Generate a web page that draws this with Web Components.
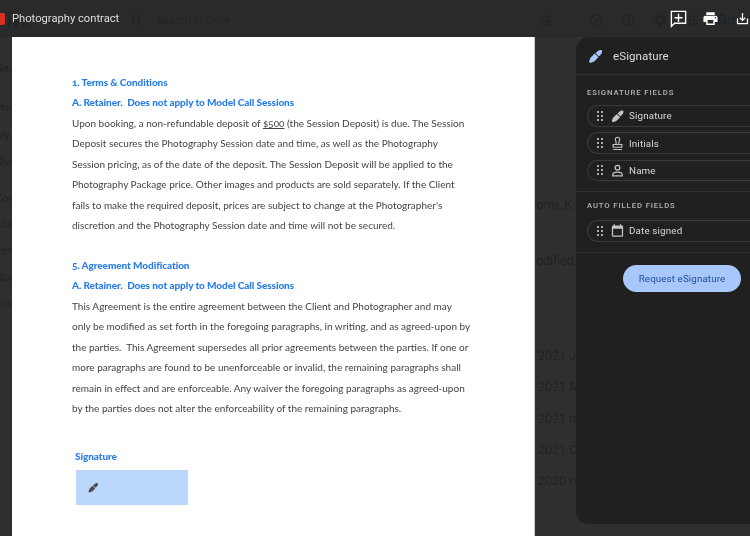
<!DOCTYPE html>
<html>
<head>
<meta charset="utf-8">
<title>Photography contract</title>
<style>
html, body { margin: 0; height: 100%; background: #2f2f2f; overflow: hidden; }
</style>
</head>
<body>

<pdf-viewer>
  <doc-page>
    <doc-section>
      <span slot="title">1. Terms &amp; Conditions</span>
      <span slot="sub">A. Retainer.&nbsp; Does not apply to Model Call Sessions</span>
      Upon booking, a non-refundable deposit of <u>$500</u> (the Session Deposit) is due. The Session<br>
      Deposit secures the Photography Session date and time, as well as the Photography<br>
      Session pricing, as of the date of the deposit. The Session Deposit will be applied to the<br>
      Photography Package price. Other images and products are sold separately. If the Client<br>
      fails to make the required deposit, prices are subject to change at the Photographer's<br>
      discretion and the Photography Session date and time will not be secured.
    </doc-section>
    <doc-section>
      <span slot="title">5. Agreement Modification</span>
      <span slot="sub">A. Retainer.&nbsp; Does not apply to Model Call Sessions</span>
      This Agreement is the entire agreement between the Client and Photographer and may<br>
      only be modified as set forth in the foregoing paragraphs, in writing, and as agreed-upon by<br>
      the parties.&nbsp; This Agreement supersedes all prior agreements between the parties. If one or<br>
      more paragraphs are found to be unenforceable or invalid, the remaining paragraphs shall<br>
      remain in effect and are enforceable. Any waiver the foregoing paragraphs as agreed-upon<br>
      by the parties does not alter the enforceability of the remaining paragraphs.
    </doc-section>
    <signature-box>Signature</signature-box>
  </doc-page>
  <esign-panel>
    <panel-group heading="eSignature fields">
      <field-chip icon="pen">Signature</field-chip>
      <field-chip icon="stamp">Initials</field-chip>
      <field-chip icon="person">Name</field-chip>
    </panel-group>
    <panel-group class="auto" heading="Auto filled fields">
      <field-chip icon="calendar">Date signed</field-chip>
    </panel-group>
  </esign-panel>
</pdf-viewer>

<script>
// shared icon shapes, all on a 24 box
const ICONS = {
  pen: `<g transform="rotate(45 12 12)"><path fill="currentColor" d="M10.800 24h2.400l2.300-5V11h-7v8zM9 9.800h6V5.500C15 3.500 13.500 1.500 12 1c-1.500.5-3 2.500-3 4.500z"/></g>`,
  stamp: `<path fill="none" stroke="currentColor" stroke-width="1.800" d="M9.800 13.500V10.500C9.800 8.500 8.500 7.500 8.500 5.500a3.500 3.500 0 0 1 7 0c0 2-1.300 3-1.300 5v3zM5 13.500h14V18H5zM5 21.500h14"/>`,
  person: `<circle cx="12" cy="7.500" r="3.700" fill="none" stroke="currentColor" stroke-width="2"/><path fill="none" stroke="currentColor" stroke-width="2" d="M4.500 20.500v-2c0-2.800 4.500-4 7.500-4s7.500 1.200 7.500 4v2z"/>`,
  calendar: `<path fill="currentColor" d="M19 4h-1V2h-2v2H8V2H6v2H5a2 2 0 0 0-2 2v14a2 2 0 0 0 2 2h14a2 2 0 0 0 2-2V6a2 2 0 0 0-2-2zm0 16H5V9h14z"/>`,
  search: `<path fill="currentColor" d="M15.500 14h-.79l-.28-.27A6.470 6.470 0 0 0 16 9.500 6.500 6.500 0 1 0 9.500 16c1.610 0 3.090-.59 4.230-1.570l.27.28v.79l5 4.990L20.490 19l-4.990-5zm-6 0C7.010 14 5 11.990 5 9.500S7.010 5 9.500 5 14 7.010 14 9.500 11.990 14 9.500 14z"/>`,
  tune: `<path fill="currentColor" d="M3 17v2h6v-2H3zM3 5v2h10V5H3zm10 16v-2h8v-2h-8v-2h-2v6h2zM7 9v2H3v2h4v2h2V9H7zm14 4v-2H11v2h10zm-6-4h2V7h4V5h-4V3h-2v6z"/>`,
  check: `<circle cx="12" cy="12" r="9" fill="none" stroke="currentColor" stroke-width="2"/><path fill="none" stroke="currentColor" stroke-width="2" d="M7.500 15.500l9-8"/>`,
  help: `<circle cx="12" cy="12" r="9" fill="none" stroke="currentColor" stroke-width="2"/><path fill="none" stroke="currentColor" stroke-width="2" d="M9.300 9.800a2.700 2.700 0 1 1 4.300 2.200c-1 .8-1.600 1.200-1.600 2.600M12 16v2"/>`,
  gear: `<path fill="currentColor" fill-rule="evenodd" d="M19.140 12.940c.04-.3.06-.61.06-.94 0-.32-.02-.64-.07-.94l2.030-1.580c.18-.14.23-.41.12-.61l-1.920-3.320c-.12-.22-.37-.29-.59-.22l-2.390.96c-.5-.38-1.030-.7-1.620-.94L14.400 2.810c-.04-.24-.24-.41-.48-.41h-3.840c-.24 0-.43.17-.47.41L9.250 5.350c-.59.24-1.130.57-1.620.94l-2.390-.96c-.22-.08-.47 0-.59.22L2.740 8.870c-.12.21-.08.47.12.61l2.030 1.580c-.05.3-.09.63-.09.94s.02.64.07.94l-2.030 1.580c-.18.14-.23.41-.12.61l1.920 3.320c.12.22.37.29.59.22l2.390-.96c.5.38 1.030.7 1.620.94l.36 2.540c.05.24.24.41.48.41h3.840c.24 0 .44-.17.47-.41l.36-2.540c.59-.24 1.130-.56 1.620-.94l2.390.96c.22.08.47 0 .59-.22l1.920-3.320c.12-.22.07-.47-.12-.61l-2.010-1.580zM12 15.600c-1.980 0-3.600-1.620-3.600-3.600s1.620-3.600 3.600-3.600 3.600 1.620 3.600 3.600-1.620 3.600-3.600 3.600z"/>`,
  apps: `<path fill="currentColor" d="M4 4h4v4H4zM10 4h4v4h-4zM16 4h4v4h-4zM4 10h4v4H4zM10 10h4v4h-4zM16 10h4v4h-4zM4 16h4v4H4zM10 16h4v4h-4zM16 16h4v4h-4z"/>`,
  comment: `<path fill="none" stroke="currentColor" stroke-width="1.700" d="M3 3h18v15H7l-4 4z"/><path fill="currentColor" d="M11.100 6h1.800v4.100H17v1.800h-4.100V16h-1.800v-4.100H7v-1.800h4.100z"/>`,
  print: `<path fill="currentColor" d="M19 8H5c-1.660 0-3 1.340-3 3v6h4v4h12v-4h4v-6c0-1.660-1.340-3-3-3zm-3 11H8v-5h8v5zm3-7c-.55 0-1-.45-1-1s.45-1 1-1 1 .45 1 1-.45 1-1 1zm-1-9H6v4h12V3z"/>`,
  download: `<path fill="currentColor" d="M19 12v7H5v-7H3v7c0 1.100.9 2 2 2h14c1.100 0 2-.9 2-2v-7h-2zm-6 .67l2.590-2.580L17 11.500l-5 5-5-5 1.410-1.410L11 12.670V3h2z"/>`,
  drag: `<path fill="currentColor" d="M6 2h4v4H6zM14 2h4v4h-4zM6 10h4v4H6zM14 10h4v4h-4zM6 18h4v4H6zM14 18h4v4h-4z"/>`
};

function icon(name, size) {
  return `<svg width="${size}" height="${size}" viewBox="0 0 24 24" style="display:block;flex:none">${ICONS[name]}</svg>`;
}

// base class, saves the attachShadow boilerplate in every element
class ShadowEl extends HTMLElement {
  constructor() {
    super();
    this.attachShadow({mode: 'open'}).innerHTML = this.render();
  }
  render() { return '<slot></slot>'; }
}

/*what the dimmed Drive page behind the viewer shows*/
class DriveBackdrop extends ShadowEl {
  render() {
    return `<style>
      :host { position: absolute; inset: 0; display: block; color: #232323; font: 11px Roboto, sans-serif; overflow: hidden; }
      .top { display: flex; align-items: center; height: 40px; }
      .top .logo { font-size: 20px; margin-left: -13px; width: 143px; }
      .top .find { margin-left: 12px; font-size: 11px; width: 381px; white-space: nowrap; }
      .top .go { font-size: 15px; font-weight: 700; margin-left: 16px; color: #1e2430; }
      .rail { position: absolute; left: -5px; top: 62px; font-size: 11px; line-height: 13px; white-space: nowrap; }
      .files { position: absolute; left: 532px; top: 197px; font-size: 12.500px; line-height: 16px; white-space: nowrap; }
      .files div { margin-bottom: 15.300px; }
      .line { position: absolute; left: 535px; top: 122px; width: 40px; height: 1px; background: #2a3540; }
    </style>
    <div class="top">
      <span class="logo">Drive</span>
      ${icon('search', 15)}
      <span class="find">Search in Drive</span>
      ${icon('tune', 15)}
      <span style="width:36px"></span>
      ${icon('check', 15)}<span style="width:17px"></span>${icon('help', 15)}<span style="width:17px"></span>${icon('gear', 15)}<span style="width:18px"></span>${icon('apps', 15)}
      <span class="go">Go</span>
    </div>
    <div class="rail">
      <div style="margin-bottom:26px">New</div>
      <div style="margin-bottom:15px">Priority</div>
      <div style="margin-bottom:14px">My Drive</div>
      <div style="margin-bottom:23px">Shared drives</div>
      <div style="margin-bottom:13px">Computers</div>
      <div style="margin-bottom:13px">Shared with me</div>
      <div style="margin-bottom:14px">Recent</div>
      <div style="margin-bottom:13px">Starred</div>
      <div>Trash</div>
    </div>
    <div class="line"></div>
    <div class="files">
      <div style="margin-bottom:40px">form_K...</div>
      <div style="margin-bottom:79px;margin-left:-7px">Modified</div>
      <div style="margin-left:6px">2021 Jon</div>
      <div style="margin-left:6px">2021 Mik</div>
      <div style="margin-left:6px">2021 me</div>
      <div style="margin-left:6px">2021 Cry</div>
      <div style="margin-left:6px">2020 me</div>
    </div>`;
  }
}

class ViewerBar extends ShadowEl {
  render() {
    return `<style>
      :host { display: flex; align-items: center; height: 37px; color: #fff; position: relative; }
      .pdf { width: 5px; height: 12px; background: #d93025; border-radius: 0 2px 2px 0; margin-right: 7px; flex: none; }
      h1 { font: 400 11.200px Roboto, sans-serif; color: #dedede; margin: 0 auto 0 0; }
      .acts { display: flex; align-items: center; margin-top: -1px; }
    </style>
    <div class="pdf"></div>
    <h1><slot></slot></h1>
    <div class="acts">
      ${icon('comment', 19)}<span style="width:14px"></span>${icon('print', 17)}<span style="width:16px"></span>${icon('download', 15)}
    </div>`;
  }
}

class PdfViewer extends ShadowEl {
  render() {
    return `<style>
      :host { display: block; position: relative; height: 536px; overflow: hidden; filter: blur(.3px); background: linear-gradient(#2a2a2a 0, #2a2a2a 37px, #2f2f2f 37px); }
      .body { display: flex; gap: 42px; padding-left: 12px; align-items: flex-start; position: relative; }
    </style>
    <drive-backdrop></drive-backdrop>
    <viewer-bar>Photography contract</viewer-bar>
    <div class="body"><slot></slot></div>`;
  }
}

class DocPage extends ShadowEl {
  render() {
    return `<style>
      :host { display: block; flex: none; box-sizing: border-box; width: 522px; height: 499px; padding: 35px 40px 0 60px; background: #fff; box-shadow: 1px 0 0 #c8c8c8; }
    </style><slot></slot>`;
  }
}

class DocSection extends ShadowEl {
  render() {
    return `<style>
      :host { display: block; margin-bottom: 19.400px; font: 400 10px/20.430px Lato, "Open Sans", sans-serif; color: #444; white-space: nowrap; font-variant-numeric: oldstyle-nums; }
      .h { display: block; color: #2a7de9; font-weight: 900; letter-spacing: -.08px; }
    </style>
    <span class="h"><slot name="title"></slot></span>
    <span class="h"><slot name="sub"></slot></span>
    <slot></slot>`;
  }
}

class SignatureBox extends ShadowEl {
  render() {
    return `<style>
      :host { display: block; margin: 28px 0 0 3px; font: 900 10px/20px Lato, sans-serif; color: #2a7de9; letter-spacing: -.08px; }
      .box { display: flex; align-items: center; box-sizing: border-box; width: 112px; height: 35px; margin: 4px 0 0 1px; padding-left: 11px; background: #bbd7fc; color: #4a4a4a; }
    </style>
    <slot></slot>
    <div class="box">${icon('pen', 13)}</div>`;
  }
}

class EsignPanel extends ShadowEl {
  render() {
    return `<style>
      :host { display: block; flex: none; width: 220px; height: 487px; box-sizing: border-box; background: #202020; border-radius: 13px 0 0 13px; color: #e3e3e3; font-family: Roboto, sans-serif; }
      header { display: flex; align-items: center; gap: 8px; height: 38px; padding-left: 11px; padding-top: 1px; box-sizing: border-box; border-bottom: 1px solid #303030; }
      header span { font-size: 11.500px; letter-spacing: .1px; color: #dcdcdc; }
      header svg { color: #a8c7fa; }
      .foot { display: flex; padding: 12px 0 0 47px; }
      button { border: 0; width: 118px; height: 27px; border-radius: 14px; background: #a8c7fa; color: #1e4f9c; font: 400 9.800px Roboto, sans-serif; letter-spacing: .1px; padding: 0; }
    </style>
    <header>${icon('pen', 18)}<span>eSignature</span></header>
    <slot></slot>
    <div class="foot"><button>Request eSignature</button></div>`;
  }
}

class PanelGroup extends ShadowEl {
  render() {
    const heading = this.getAttribute('heading') || '';
    return `<style>
      :host { display: block; padding: 11px 0 10px 11px; border-bottom: 1px solid #303030; }
      :host(.auto) { padding-top: 7px; padding-bottom: 10px; }
      :host(.auto) h2 { margin-bottom: 7px; }
      h2 { margin: 0 0 5px; font: 500 7.700px/14px Roboto, sans-serif; letter-spacing: .9px; text-transform: uppercase; color: #b4b4b4; }
      .list { display: flex; flex-direction: column; gap: 5.800px; }
    </style>
    <h2>${heading}</h2>
    <div class="list"><slot></slot></div>`;
  }
}

class FieldChip extends ShadowEl {
  render() {
    const which = this.getAttribute('icon');
    return `<style>
      :host { display: flex; align-items: center; box-sizing: border-box; height: 21.500px; padding-left: 6px; border: 1px solid #3a3a3a; border-right: 0; border-radius: 11px 0 0 11px; font: 400 9.800px Roboto, sans-serif; letter-spacing: .15px; color: #dadada; }
      .d { color: #a9a9a9; margin-right: 4px; }
      .i { color: #c4c4c4; margin-right: 3px; width: 16px; }
    </style>
    <span class="d">${icon('drag', 12)}</span>
    <span class="i">${icon(which, which == 'pen' ? 16 : 15)}</span>
    <slot></slot>`;
  }
}

customElements.define('drive-backdrop', DriveBackdrop);
customElements.define('viewer-bar', ViewerBar);
customElements.define('pdf-viewer', PdfViewer);
customElements.define('doc-page', DocPage);
customElements.define('doc-section', DocSection);
customElements.define('signature-box', SignatureBox);
customElements.define('esign-panel', EsignPanel);
customElements.define('panel-group', PanelGroup);
customElements.define('field-chip', FieldChip);
</script>
</body>
</html>
